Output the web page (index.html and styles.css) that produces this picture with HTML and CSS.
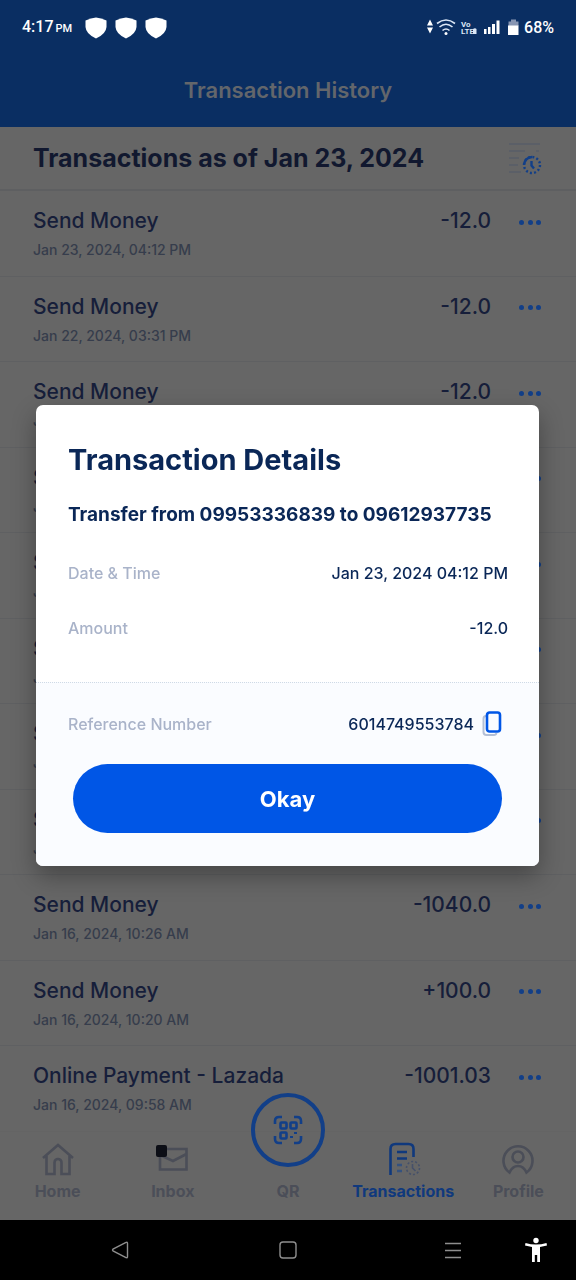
FILE: index.html
```html
<!DOCTYPE html>
<html lang="en">
<head>
<meta charset="utf-8">
<meta name="viewport" content="width=device-width, initial-scale=1">
<title>Transaction History</title>
<link rel="stylesheet" href="styles.css">
</head>
<body>
<div class="app">
  <header class="header">
    <div class="status">
      <div class="status-left">
        <span class="clock">4:17<small>PM</small></span>
        <svg class="shield" viewBox="0 0 22 22"><path d="M11 0.500Q16 1 21.500 3.500V10Q21 17 11 21.500Q1 17 0.500 10V3.500Q6 1 11 0.500Z"/></svg>
        <svg class="shield" viewBox="0 0 22 22"><path d="M11 0.500Q16 1 21.500 3.500V10Q21 17 11 21.500Q1 17 0.500 10V3.500Q6 1 11 0.500Z"/></svg>
        <svg class="shield" viewBox="0 0 22 22"><path d="M11 0.500Q16 1 21.500 3.500V10Q21 17 11 21.500Q1 17 0.500 10V3.500Q6 1 11 0.500Z"/></svg>
      </div>
      <div class="status-right">
        <svg viewBox="0 0 92 20" class="signals" aria-hidden="true">
          <path d="M0 7.500 3 1.500l3 6ZM0 9.500l3 6 3-6Z" fill="#fff"/>
          <g fill="none" stroke="#dbe6f5" stroke-width="1.600"><path d="M10 5.500Q19-1.500 28 5.500"/><path d="M12.500 9Q19 3.500 25.500 9"/><path d="M15.500 12.500Q19 9.500 22.500 12.500"/></g>
          <circle cx="19" cy="15.500" r="1.500" fill="#fff"/>
          <text x="34" y="9" class="tiny">Vo</text><text x="34" y="16" class="tiny">LTE</text>
          <path d="M46 11q2-1.500 3.500 0v5H46z" fill="#dbe6f5"/>
          <path d="M57 11h2.500v5H57zM61 9h2.500v7H61zM65 6h3v10h-3zM69.500 2.500h3V16h-3z" fill="#fff"/>
          <path d="M84 1.500h5v2h2.500V8h-10V3.500H84z" fill="#8795b2"/><path d="M81 7.500h10.500V17H81z" fill="#fff"/>
        </svg>
        <span class="battery">68%</span>
      </div>
    </div>
    <h1 class="page-title">Transaction History</h1>
  </header>

  <div class="summary">
    <h2>Transactions as of Jan 23, 2024</h2>
    <button class="icon-button" aria-label="Filter by date">
      <svg width="34" height="34" viewBox="0 0 34 34" fill="none"><path d="M1 3h31M1 10h16M28 10h3M1 17h10M1 24h9M1 31h12" stroke="#5b5f67" stroke-width="2"/><circle cx="24" cy="24" r="8" stroke="#123f88" stroke-width="2.400" stroke-dasharray="2 2.200"/><path d="M16 24a8 8 0 0 1 8-8" stroke="#123f88" stroke-width="2.400"/><path d="M23.500 20v4.500l2.500 3" stroke="#123f88" stroke-width="2.400"/></svg>
    </button>
  </div>

  <main class="list">
    <article class="row"><h3>Send Money</h3><b>-12.0</b><button class="more" aria-label="More"><i></i><i></i><i></i></button><time>Jan 23, 2024, 04:12 PM</time></article>
    <article class="row"><h3>Send Money</h3><b>-12.0</b><button class="more" aria-label="More"><i></i><i></i><i></i></button><time>Jan 22, 2024, 03:31 PM</time></article>
    <article class="row"><h3>Send Money</h3><b>-12.0</b><button class="more" aria-label="More"><i></i><i></i><i></i></button><time>Jan</time></article>
    <article class="row"><h3>Send Money</h3><b></b><button class="more" aria-label="More"><i></i><i></i><i></i></button><time>Jan</time></article>
    <article class="row"><h3>Send Money</h3><b></b><button class="more" aria-label="More"><i></i><i></i><i></i></button><time>Jan</time></article>
    <article class="row"><h3>Send Money</h3><b></b><button class="more" aria-label="More"><i></i><i></i><i></i></button><time>Jan</time></article>
    <article class="row"><h3>Send Money</h3><b></b><button class="more" aria-label="More"><i></i><i></i><i></i></button><time>Jan</time></article>
    <article class="row"><h3>Send Money</h3><b></b><button class="more" aria-label="More"><i></i><i></i><i></i></button><time>Jan</time></article>
    <article class="row"><h3>Send Money</h3><b>-1040.0</b><button class="more" aria-label="More"><i></i><i></i><i></i></button><time>Jan 16, 2024, 10:26 AM</time></article>
    <article class="row"><h3>Send Money</h3><b>+100.0</b><button class="more" aria-label="More"><i></i><i></i><i></i></button><time>Jan 16, 2024, 10:20 AM</time></article>
    <article class="row"><h3>Online Payment - Lazada</h3><b>-1001.03</b><button class="more" aria-label="More"><i></i><i></i><i></i></button><time>Jan 16, 2024, 09:58 AM</time></article>
  </main>

  <nav class="tabs">
    <a href="#home" class="tab">
      <svg viewBox="0 0 36 36"><path d="M3 17 18 4l15 13M6.500 15v18h8V21.500a3.500 3.500 0 0 1 7 0V33h8V15"/></svg>
      <span>Home</span>
    </a>
    <a href="#inbox" class="tab">
      <svg viewBox="0 0 36 36"><path d="M5 8h26.500v20.500H5ZM5 14l13 6 13.500-7"/><rect x="1" y="4" width="11" height="12" rx="2" fill="#0c0e16" stroke="none"/></svg>
      <span>Inbox</span>
    </a>
    <a href="#qr" class="tab">
      <i class="qr"><svg viewBox="0 0 36 36"><path d="M5 12V9q0-4 4-4h3M24 5h3q4 0 4 4v3M31 24v3q0 4-4 4h-3M12 31H9q-4 0-4-4v-3"/><rect x="10.500" y="10.500" width="6" height="6" rx="1"/><rect x="20.500" y="10.500" width="6" height="6" rx="1"/><rect x="10.500" y="20.500" width="6" height="6" rx="1"/><path d="M20 25h3M24 21h3" stroke-width="2"/></svg></i>
      <span>QR</span>
    </a>
    <a href="#transactions" class="tab active">
      <svg viewBox="0 0 36 36"><path d="M5.500 34V8q0-5 5-5h13q5 0 5 5v8"/><path d="M12 11h10M12 17.500h10"/><path d="M12 24h5M12 30h5" stroke="#35527f"/><circle cx="28" cy="27" r="6.500" stroke="#46516a" stroke-width="1.600" stroke-dasharray="2 2"/><path d="M27.500 23v4l3 3" stroke="#46516a" stroke-width="1.600"/></svg>
      <span>Transactions</span>
    </a>
    <a href="#profile" class="tab">
      <svg viewBox="0 0 36 36"><path d="M9.500 31.500a14.500 14.500 0 1 1 17 0q-3-6.500-8.500-6.500t-8.500 6.500Z"/><circle cx="18" cy="16" r="5.500"/></svg>
      <span>Profile</span>
    </a>
  </nav>

  <footer class="system">
    <button aria-label="Back"><svg viewBox="0 0 24 24"><path d="M18 4.500q1.500-.8 1.500 1v13q0 1.800-1.500 1L5 13q-1-1 0-2Z"/></svg></button>
    <button aria-label="Overview"><svg viewBox="0 0 24 24"><rect x="4" y="4" width="16" height="16" rx="3"/></svg></button>
    <button class="recents" aria-label="Recent apps"><svg viewBox="0 0 24 24"><path d="M4 5.500h16M4 12.500h16M4 19.500h16"/></svg></button>
    <button class="access" aria-label="Accessibility"><svg viewBox="0 0 24 26"><circle cx="12" cy="3.500" r="2.700"/><path d="M1.500 6Q12 9 22.500 6l.5 2.500-7 1.500v15h-2.800v-7h-2.400v7H8V10L1 8.500Z"/></svg></button>
  </footer>
</div>

<div class="overlay">
  <section class="dialog" role="dialog" aria-labelledby="dialog-title">
    <div class="details">
      <h2 id="dialog-title">Transaction Details</h2>
      <p class="transfer">Transfer from 09953336839 to 09612937735</p>
      <dl>
        <div class="pair"><dt>Date &amp; Time</dt><dd>Jan 23, 2024 04:12 PM</dd></div>
        <div class="pair"><dt>Amount</dt><dd>-12.0</dd></div>
      </dl>
    </div>
    <div class="reference">
      <div class="ref-line">
        <span class="label">Reference Number</span>
        <span class="number">6014749553784</span>
        <button class="copy" aria-label="Copy reference number"><svg width="20" height="26" viewBox="0 0 20 26" fill="none"><path d="M4 5Q1.500 5 1.500 8v13q0 3 3 3H12q2 0 2.500-2" stroke="#b3bfd6" stroke-width="2"/><rect x="5" y="1.500" width="13" height="19" rx="2.500" fill="#fafcff" stroke="#0056e6" stroke-width="2.600"/></svg></button>
      </div>
      <button class="okay">Okay</button>
    </div>
  </section>
</div>
</body>
</html>
```
FILE: styles.css
```css
* { box-sizing: border-box; }
body { margin: 0; background: #666; font-family: Inter, "Open Sans", sans-serif; color: #11182f; }
h1, h2, h3, p, dl, dd { margin: 0; }
button { border: 0; padding: 0; background: none; font: inherit; cursor: pointer; }
svg { display: block; }

.app { min-height: 100vh; display: flex; flex-direction: column; }

.header { background: #0a2e62; }
.status { height: 56px; padding: 0 22px; display: flex; justify-content: space-between; align-items: center; color: #fff; font: 500 16px/20px Roboto, sans-serif; }
.status-left, .status-right { display: flex; align-items: center; }
.status-left { gap: 8px; }
.status-right { gap: 5px; }
.clock { margin-right: 5px; }
.clock small { font-size: 11px; margin-left: 2px; }
.shield { width: 22px; height: 22px; fill: #fff; }
.signals { width: 92px; height: 20px; }
.tiny { font: 700 8px Roboto, sans-serif; fill: #dbe6f5; }
.page-title { padding: 20px 0 23px; text-align: center; font-size: 22px; line-height: 28px; font-weight: 600; color: #63666b; }

.summary { height: 64px; padding: 0 34px 0 33px; display: flex; justify-content: space-between; align-items: center; border-bottom: 2px solid #5e5f61; }
.summary h2 { font-size: 25px; line-height: 32px; font-weight: 700; }

.list { flex: 1; display: grid; grid-auto-rows: 1fr; }
.row { display: grid; grid-template-columns: 1fr auto 22px; grid-template-rows: 24px 20px; column-gap: 28px; row-gap: 7px; align-items: center; padding: 18px 35px 14px 33px; border-bottom: 1px solid #5f6062; }
.row:last-child { border-bottom-color: #646464; }
.row h3, .row b { font-size: 21px; line-height: 24px; font-weight: 500; color: #161e3a; }
.row time { grid-column: 1 / -1; font-size: 14px; line-height: 20px; font-weight: 500; color: #363d4c; }
.more { display: flex; justify-content: space-between; padding-top: 2px; }
.more i { width: 5px; height: 5px; border-radius: 50%; background: #123f88; }

.tabs { height: 88px; padding-bottom: 19px; display: grid; grid-template-columns: repeat(5, 1fr); grid-template-rows: 100%; align-items: end; }
.tab { display: flex; flex-direction: column; align-items: center; gap: 4px; color: #4b4e58; text-decoration: none; font-size: 16px; line-height: 20px; font-weight: 700; }
.tab svg { width: 36px; height: 36px; fill: none; stroke: currentColor; stroke-width: 2.6; }
.tab.active { color: #10397d; }
.qr { width: 74px; height: 74px; margin-bottom: 10px; border: 4px solid #123f88; border-radius: 50%; display: grid; place-items: center; color: #123f88; }

.system { height: 60px; background: #000; display: grid; grid-template-columns: 240fr 96fr 75fr 84fr 81fr; align-items: center; justify-items: center; }
.system svg { width: 24px; height: 24px; fill: none; stroke: #8e8e8e; stroke-width: 1.4; }
.recents { grid-column: 4; }
.system .access svg { fill: #fff; stroke: none; height: 26px; }

.overlay { position: fixed; inset: 0; padding: 0 37px 9px 36px; display: flex; align-items: center; }
.dialog { width: 100%; border-radius: 7px; background: #fff; color: #0a2757; overflow: hidden; box-shadow: 0 10px 24px rgba(0, 0, 0, .32); }
.details { padding: 36px 31px 42px 32px; }
.dialog h2 { font-size: 29px; line-height: 38px; font-weight: 700; }
.transfer { margin-top: 24px; font-size: 19px; line-height: 24px; font-weight: 700; }
dl { margin-top: 34px; display: grid; gap: 31px; }
.pair, .ref-line { display: flex; justify-content: space-between; align-items: center; font-size: 16px; line-height: 24px; font-weight: 500; }
dt, .label { color: #a9b3c9; }
.reference { padding: 26px 37px 33px; background: #fafcff; border-top: 1px dotted #cfdae6; }
.ref-line { margin: 0 0 25px -5px; height: 30px; }
.label { flex: 1; }
.copy { margin-left: 8px; }
.okay { display: block; width: 100%; height: 69px; border-radius: 35px; background: #0056e6; color: #fff; font-size: 22px; font-weight: 700; }
```
